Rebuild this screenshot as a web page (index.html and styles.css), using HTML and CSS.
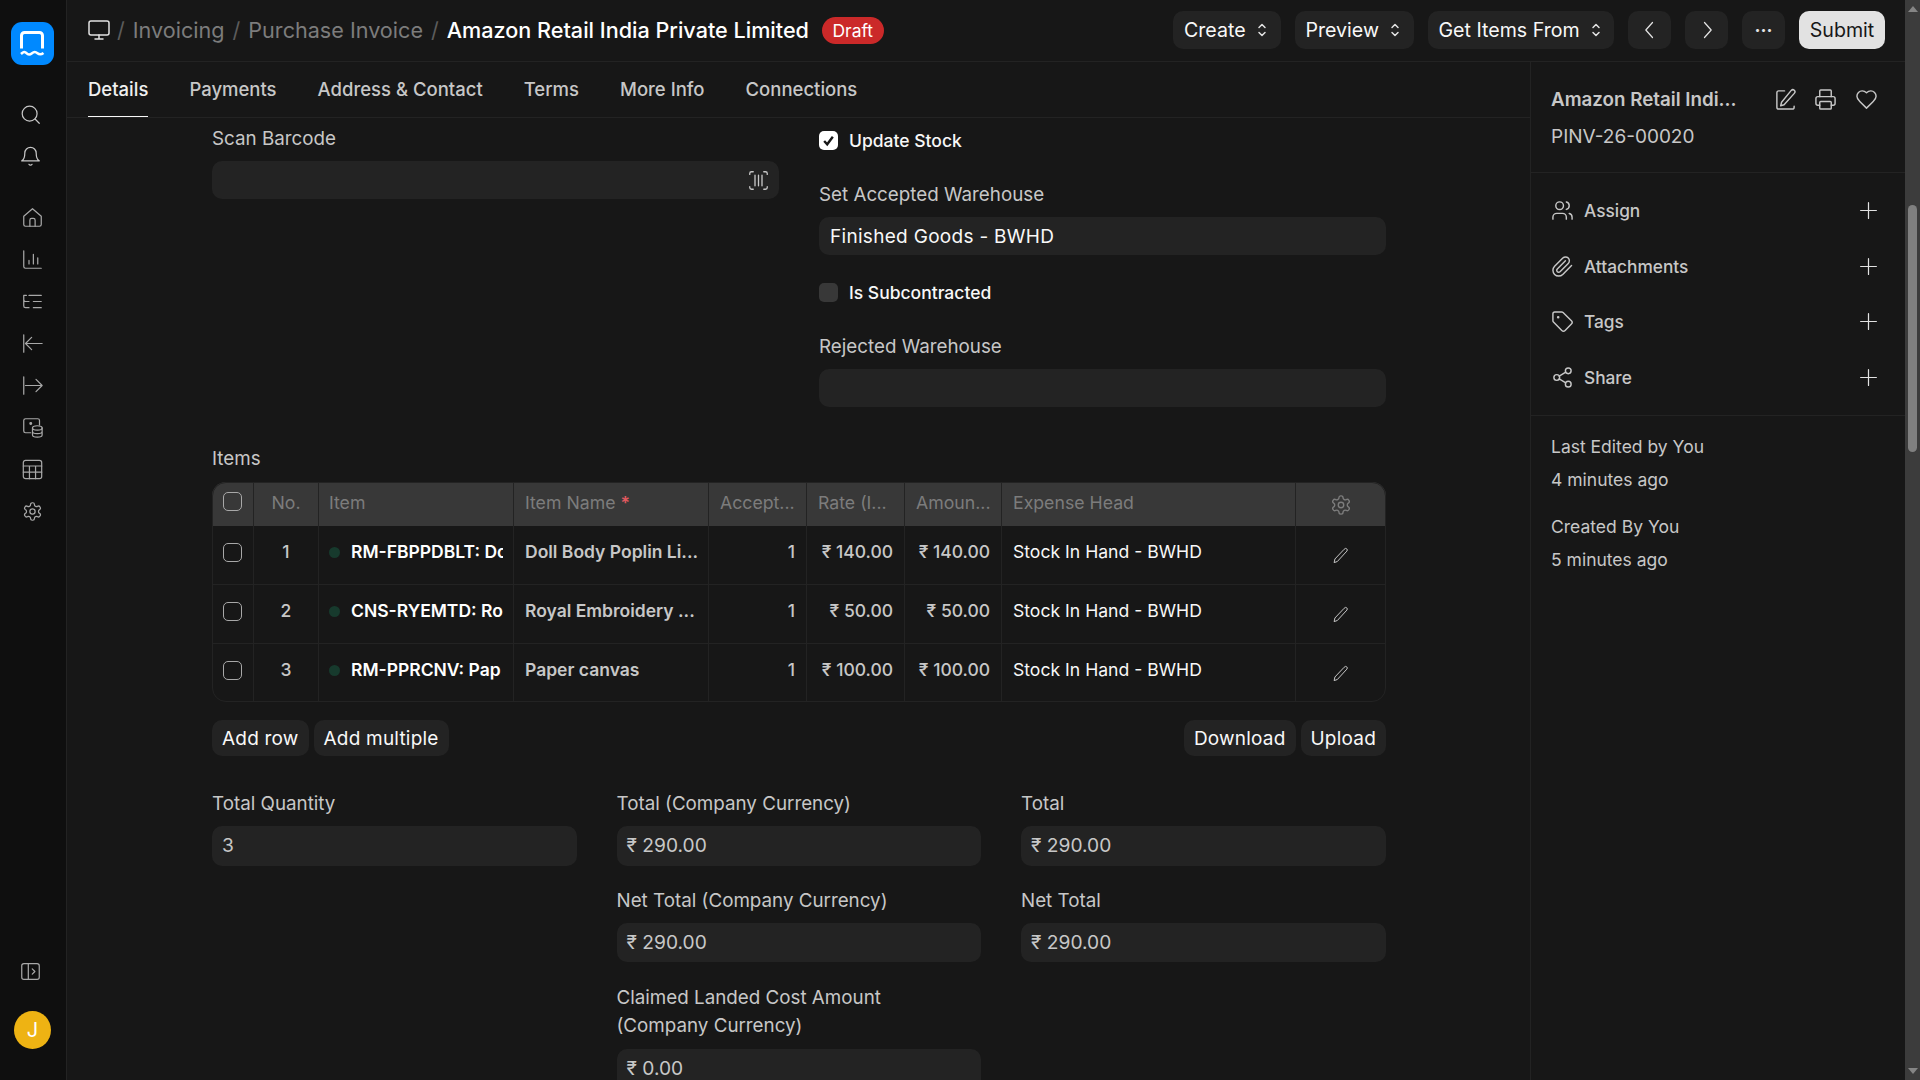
FILE: index.html
```html
<!DOCTYPE html>
<html lang="en">
<head>
  <meta charset="UTF-8" />
  <meta name="viewport" content="width=device-width, initial-scale=1.0"/>
  <title>Amazon Retail India Private Limited - Purchase Invoice</title>
  <link rel="stylesheet" href="styles.css">
</head>
<body>
  <svg class="sprite" xmlns="http://www.w3.org/2000/svg">
    <symbol id="i-monitor" viewBox="0 0 24 24"><rect x="2" y="3" width="20" height="14" rx="2"/><path d="M8 21h8M12 17v4"/></symbol>
    <symbol id="i-search" viewBox="0 0 24 24"><circle cx="11" cy="11" r="8.5"/><path d="m22 22-4.8-4.8"/></symbol>
    <symbol id="i-bell" viewBox="0 0 24 24"><path d="M5.500 8a6.500 6.500 0 0 1 13 0c0 7 3.500 9 3.500 9H2s3.500-2 3.500-9"/><path d="M10.300 21a2 2 0 0 0 3.400 0"/></symbol>
    <symbol id="i-home" viewBox="0 0 24 24"><path d="M2 10.500 12 2l10 8.500V20a2 2 0 0 1-2 2H4a2 2 0 0 1-2-2z"/><path d="M9 22v-7a2 2 0 0 1 2-2h2a2 2 0 0 1 2 2v7"/></symbol>
    <symbol id="i-chart" viewBox="0 0 24 24"><path d="M2 2v18a2 2 0 0 0 2 2h18"/><path d="M8 17v-4M13 17V6M18 17v-7"/></symbol>
    <symbol id="i-tree" viewBox="0 0 24 24"><path d="M22 12H13M22 5H8M22 19h-9"/><path d="M2 5v5a2 2 0 0 0 2 2h4M2 10v7a2 2 0 0 0 2 2h4M2 5h3"/></symbol>
    <symbol id="i-arrow-in" viewBox="0 0 24 24"><path d="M2 22V2M11 5l-7 7 7 7M4 12h19"/></symbol>
    <symbol id="i-arrow-out" viewBox="0 0 24 24"><path d="M2 2v20M4 12h19M16 5l7 7-7 7"/></symbol>
    <symbol id="i-stock" viewBox="0 0 24 24"><path d="M10 18H4a2 2 0 0 1-2-2V4a2 2 0 0 1 2-2h14a2 2 0 0 1 2 2v5"/><circle cx="10" cy="7.500" r="1" fill="currentColor"/><ellipse cx="17.500" cy="12.500" rx="5.500" ry="2.500"/><path d="M12 12.500v8c0 1.400 2.500 2.500 5.500 2.500s5.500-1.100 5.500-2.500v-8M12 16.500c0 1.400 2.500 2.500 5.500 2.500s5.500-1.100 5.500-2.500"/></symbol>
    <symbol id="i-table" viewBox="0 0 24 24"><rect x="1.500" y="1.500" width="21" height="21" rx="2.500"/><path d="M1.500 8h21M1.500 15h21M8.500 8v14.500M15.500 8v14.500"/></symbol>
    <symbol id="i-gear" viewBox="0 0 24 24"><path d="M12.220 2h-.44a2 2 0 0 0-2 2v.18a2 2 0 0 1-1 1.730l-.43.250a2 2 0 0 1-2 0l-.15-.080a2 2 0 0 0-2.730.730l-.22.380a2 2 0 0 0 .730 2.730l.150.100a2 2 0 0 1 1 1.720v.510a2 2 0 0 1-1 1.740l-.150.090a2 2 0 0 0-.730 2.730l.22.380a2 2 0 0 0 2.730.730l.150-.080a2 2 0 0 1 2 0l.43.250a2 2 0 0 1 1 1.730V20a2 2 0 0 0 2 2h.44a2 2 0 0 0 2-2v-.18a2 2 0 0 1 1-1.730l.43-.250a2 2 0 0 1 2 0l.150.080a2 2 0 0 0 2.730-.730l.22-.390a2 2 0 0 0-.730-2.730l-.150-.080a2 2 0 0 1-1-1.740v-.5a2 2 0 0 1 1-1.740l.150-.090a2 2 0 0 0 .730-2.730l-.22-.380a2 2 0 0 0-2.730-.730l-.150.080a2 2 0 0 1-2 0l-.43-.250a2 2 0 0 1-1-1.730V4a2 2 0 0 0-2-2z"/><circle cx="12" cy="12" r="3"/></symbol>
    <symbol id="i-panel" viewBox="0 0 24 24"><rect x="2" y="3" width="20" height="18" rx="2.500"/><path d="M9.500 3v18M14 9l3 3-3 3"/></symbol>
    <symbol id="i-updown" viewBox="0 0 10 16"><path d="m2 5.500 3-3 3 3M2 10.500l3 3 3-3"/></symbol>
    <symbol id="i-left" viewBox="0 0 24 24"><path d="m15 3-8 9 8 9"/></symbol>
    <symbol id="i-right" viewBox="0 0 24 24"><path d="m9 3 8 9-8 9"/></symbol>
    <symbol id="i-edit" viewBox="0 0 24 24"><path d="M11 3H5a2 2 0 0 0-2 2v15a2 2 0 0 0 2 2h14a2 2 0 0 0 2-2v-1"/><path d="M18 2.500a2.200 2.200 0 0 1 3.200 3.100L10.500 17.500 7 18.500l.9-3.600z"/></symbol>
    <symbol id="i-print" viewBox="0 0 24 24"><path d="M6 9V3a1 1 0 0 1 1-1h10a1 1 0 0 1 1 1v6"/><path d="M6 18H4a2 2 0 0 1-2-2v-5a2 2 0 0 1 2-2h16a2 2 0 0 1 2 2v5a2 2 0 0 1-2 2h-2"/><rect x="6" y="14" width="12" height="8" rx="1"/></symbol>
    <symbol id="i-heart" viewBox="0 0 24 24"><path d="M19 14c1.500-1.500 3-3.200 3-5.500A5.500 5.500 0 0 0 16.500 3c-1.800 0-3 .5-4.500 2-1.500-1.500-2.700-2-4.500-2A5.500 5.500 0 0 0 2 8.500c0 2.300 1.500 4 3 5.500l7 7z"/></symbol>
    <symbol id="i-users" viewBox="0 0 24 24"><path d="M16 21v-2a4 4 0 0 0-4-4H6a4 4 0 0 0-4 4v2"/><circle cx="9" cy="7" r="4"/><path d="M22 21v-2a4 4 0 0 0-3-3.870M16 3.130a4 4 0 0 1 0 7.750"/></symbol>
    <symbol id="i-clip" viewBox="0 0 24 24"><path d="m21.440 11.050-9.190 9.190a6 6 0 0 1-8.490-8.490l8.570-8.570A4 4 0 1 1 18 8.840l-8.590 8.570a2 2 0 0 1-2.830-2.830l8.490-8.480"/></symbol>
    <symbol id="i-tag" viewBox="0 0 24 24"><path d="M12.590 2.590A2 2 0 0 0 11.170 2H4a2 2 0 0 0-2 2v7.170a2 2 0 0 0 .590 1.420l8.700 8.700a2.430 2.430 0 0 0 3.420 0l6.580-6.580a2.430 2.430 0 0 0 0-3.420z"/><circle cx="7.500" cy="7.500" r=".6" fill="currentColor"/></symbol>
    <symbol id="i-share" viewBox="0 0 24 24"><circle cx="18" cy="5" r="3"/><circle cx="6" cy="12" r="3"/><circle cx="18" cy="19" r="3"/><path d="m8.590 13.510 6.830 3.980M15.410 6.510l-6.820 3.980"/></symbol>
    <symbol id="i-plus" viewBox="0 0 24 24"><path d="M12 3v18M3 12h18"/></symbol>
    <symbol id="i-pencil" viewBox="0 0 24 24"><path d="M17.500 2.800a2.300 2.300 0 0 1 3.500 3L7.500 20.500 3 22l1-4.500Z"/></symbol>
    <symbol id="i-barcode" viewBox="0 0 24 24"><path d="M6 2H4a2 2 0 0 0-2 2v1M18 2h2a2 2 0 0 1 2 2v1M6 22H4a2 2 0 0 1-2-2v-1M18 22h2a2 2 0 0 0 2-2v-1"/><path d="M8 6v12M12 6v12M16 6v12"/></symbol>
  </svg>

  <div class="app">
    <aside class="rail">
      <div class="logo">
        <svg width="27" height="27" viewBox="0 0 27 27" fill="none" stroke="#fff" stroke-width="3"><path d="M2.500 18.500V5.500a3 3 0 0 1 3-3h15a3 3 0 0 1 3 3v13"/><path d="M2 24c2.500-2.500 4-2.500 5.500-.8s3.500 1.700 5.500 0 3.500-1.700 5.500 0 3.500 1.700 6-.2" stroke-width="2.500"/></svg>
      </div>
      <nav class="rail-group rail-top">
        <a class="rail-item shift"><svg class="ico"><use href="#i-search"/></svg></a>
        <a class="rail-item shift"><svg class="ico"><use href="#i-bell"/></svg></a>
      </nav>
      <nav class="rail-group rail-mods">
        <a class="rail-item"><svg class="ico"><use href="#i-home"/></svg></a>
        <a class="rail-item"><svg class="ico"><use href="#i-chart"/></svg></a>
        <a class="rail-item"><svg class="ico"><use href="#i-tree"/></svg></a>
        <a class="rail-item"><svg class="ico"><use href="#i-arrow-in"/></svg></a>
        <a class="rail-item"><svg class="ico"><use href="#i-arrow-out"/></svg></a>
        <a class="rail-item"><svg class="ico"><use href="#i-stock"/></svg></a>
        <a class="rail-item"><svg class="ico"><use href="#i-table"/></svg></a>
        <a class="rail-item"><svg class="ico"><use href="#i-gear"/></svg></a>
      </nav>
      <div class="rail-bottom">
        <a class="rail-item shift"><svg class="ico"><use href="#i-panel"/></svg></a>
        <div class="avatar">J</div>
      </div>
    </aside>

    <div class="main">
      <header class="topbar">
        <div class="crumbs">
          <svg class="ico crumb-ico"><use href="#i-monitor"/></svg>
          <span class="sep">/</span>
          <span class="crumb">Invoicing</span>
          <span class="sep">/</span>
          <span class="crumb">Purchase Invoice</span>
          <span class="sep">/</span>
          <span class="crumb-current">Amazon Retail India Private Limited</span>
          <span class="badge">Draft</span>
        </div>
        <div class="actions">
          <button class="btn btn-select w-create">Create <svg class="updown"><use href="#i-updown"/></svg></button>
          <button class="btn btn-select w-preview">Preview <svg class="updown"><use href="#i-updown"/></svg></button>
          <button class="btn btn-select w-items">Get Items From <svg class="updown"><use href="#i-updown"/></svg></button>
          <button class="btn btn-icon"><svg class="ico"><use href="#i-left"/></svg></button>
          <button class="btn btn-icon"><svg class="ico"><use href="#i-right"/></svg></button>
          <button class="btn btn-icon dots">&middot;&middot;&middot;</button>
          <button class="btn btn-primary">Submit</button>
        </div>
      </header>

      <div class="content">
        <div class="doc">
          <div class="tabs">
            <a class="tab active">Details</a>
            <a class="tab">Payments</a>
            <a class="tab">Address &amp; Contact</a>
            <a class="tab">Terms</a>
            <a class="tab">More Info</a>
            <a class="tab">Connections</a>
          </div>

          <div class="form">
            <section class="two-col">
              <div>
                <label class="field-label">Scan Barcode</label>
                <div class="input input-barcode"><svg class="ico barcode"><use href="#i-barcode"/></svg></div>
              </div>
              <div class="right-col">
                <div class="check-row"><span class="check checked"><svg width="13" height="13" viewBox="0 0 12 12" fill="none" stroke="#171717" stroke-width="2.200"><path d="m2 6.500 2.800 3L10 2.500"/></svg></span>Update Stock</div>
                <label class="field-label gap-a">Set Accepted Warehouse</label>
                <div class="input input-value">Finished Goods - BWHD</div>
                <div class="check-row gap-b"><span class="check"></span>Is Subcontracted</div>
                <label class="field-label gap-a">Rejected Warehouse</label>
                <div class="input"></div>
              </div>
            </section>

            <div class="items-label">Items</div>
            <table class="grid">
              <colgroup>
                <col class="c-check"><col class="c-no"><col class="c-name"><col class="c-name"><col class="c-num"><col class="c-num"><col class="c-amt"><col class="c-head"><col class="c-edit">
              </colgroup>
              <thead>
                <tr>
                  <th class="cell-check"><input type="checkbox"></th>
                  <th class="center">No.</th>
                  <th class="code-cell">Item</th>
                  <th>Item Name <span class="req">*</span></th>
                  <th>Accept...</th>
                  <th>Rate (I...</th>
                  <th>Amoun...</th>
                  <th>Expense Head</th>
                  <th class="center"><svg class="ico gear-head"><use href="#i-gear"/></svg></th>
                </tr>
              </thead>
              <tbody>
                <tr>
                  <td class="cell-check"><input type="checkbox"></td>
                  <td class="center">1</td>
                  <td class="code-cell"><div class="item-code"><span class="dot"></span><b>RM-FBPPDBLT: Do</b></div></td>
                  <td class="item-name">Doll Body Poplin Li...</td>
                  <td class="num">1</td>
                  <td class="num">₹ 140.00</td>
                  <td class="num">₹ 140.00</td>
                  <td class="head">Stock In Hand - BWHD</td>
                  <td class="center"><svg class="pencil"><use href="#i-pencil"/></svg></td>
                </tr>
                <tr>
                  <td class="cell-check"><input type="checkbox"></td>
                  <td class="center">2</td>
                  <td class="code-cell"><div class="item-code"><span class="dot"></span><b>CNS-RYEMTD: Ro</b></div></td>
                  <td class="item-name">Royal Embroidery ...</td>
                  <td class="num">1</td>
                  <td class="num">₹ 50.00</td>
                  <td class="num">₹ 50.00</td>
                  <td class="head">Stock In Hand - BWHD</td>
                  <td class="center"><svg class="pencil"><use href="#i-pencil"/></svg></td>
                </tr>
                <tr class="row-short">
                  <td class="cell-check"><input type="checkbox"></td>
                  <td class="center">3</td>
                  <td class="code-cell"><div class="item-code"><span class="dot"></span><b>RM-PPRCNV: Pap</b></div></td>
                  <td class="item-name">Paper canvas</td>
                  <td class="num">1</td>
                  <td class="num">₹ 100.00</td>
                  <td class="num">₹ 100.00</td>
                  <td class="head">Stock In Hand - BWHD</td>
                  <td class="center"><svg class="pencil"><use href="#i-pencil"/></svg></td>
                </tr>
              </tbody>
            </table>

            <div class="grid-actions">
              <div class="btn-group">
                <button class="btn btn-sm">Add row</button>
                <button class="btn btn-sm">Add multiple</button>
              </div>
              <div class="btn-group">
                <button class="btn btn-sm">Download</button>
                <button class="btn btn-sm">Upload</button>
              </div>
            </div>

            <section class="three-col">
              <div>
                <label class="field-label">Total Quantity</label>
                <div class="input input-tall">3</div>
              </div>
              <div>
                <label class="field-label">Total (Company Currency)</label>
                <div class="input input-tall">₹ 290.00</div>
                <label class="field-label gap-c">Net Total (Company Currency)</label>
                <div class="input input-tall">₹ 290.00</div>
                <label class="field-label gap-c label-wrap">Claimed Landed Cost Amount (Company Currency)</label>
                <div class="input input-tall">₹ 0.00</div>
              </div>
              <div>
                <label class="field-label">Total</label>
                <div class="input input-tall">₹ 290.00</div>
                <label class="field-label gap-c">Net Total</label>
                <div class="input input-tall">₹ 290.00</div>
              </div>
            </section>
          </div>
        </div>

        <aside class="side">
          <div class="side-head">
            <div class="side-title-row">
              <span class="side-title">Amazon Retail Indi...</span>
              <div class="side-icons">
                <svg class="ico"><use href="#i-edit"/></svg>
                <svg class="ico"><use href="#i-print"/></svg>
                <svg class="ico"><use href="#i-heart"/></svg>
              </div>
            </div>
            <div class="side-id">PINV-26-00020</div>
          </div>
          <div class="side-list">
            <div class="side-row"><svg class="ico"><use href="#i-users"/></svg><span>Assign</span><svg class="plus"><use href="#i-plus"/></svg></div>
            <div class="side-row"><svg class="ico"><use href="#i-clip"/></svg><span>Attachments</span><svg class="plus"><use href="#i-plus"/></svg></div>
            <div class="side-row"><svg class="ico"><use href="#i-tag"/></svg><span>Tags</span><svg class="plus"><use href="#i-plus"/></svg></div>
            <div class="side-row"><svg class="ico"><use href="#i-share"/></svg><span>Share</span><svg class="plus"><use href="#i-plus"/></svg></div>
          </div>
          <div class="side-meta">
            <p>Last Edited by You</p>
            <p>4 minutes ago</p>
            <p class="meta-gap">Created By You</p>
            <p>5 minutes ago</p>
          </div>
        </aside>
      </div>
    </div>

    <div class="scrollbar">
      <span class="arrow-up"></span>
      <span class="thumb"></span>
      <span class="arrow-down"></span>
    </div>
  </div>
</body>
</html>
```

FILE: styles.css
```css
* {
  box-sizing: border-box;
}
html, body {
  height: 100%;
}
body {
  margin: 0;
  background-color: #171717;
  color: #f8f8f8;
  font-family: "Inter", "Liberation Sans", sans-serif;
  font-size: 17.5px;
  overflow: hidden;
}
p {
  margin: 0;
}
button {
  font-family: inherit;
}
.sprite {
  display: none;
}
.ico {
  width: 20px;
  height: 20px;
  flex: none;
  fill: none;
  stroke: currentColor;
  stroke-width: 1.5;
  stroke-linecap: round;
  stroke-linejoin: round;
}

.app {
  display: flex;
  height: 1080px;
}

/* left rail */
.rail {
  width: 67px;
  flex: none;
  display: flex;
  flex-direction: column;
  align-items: center;
  background-color: #0f0f0f;
  border-right: 1px solid #232323;
  padding-top: 22px;
  color: #a8a8a8;
}
.logo {
  width: 43px;
  height: 43px;
  margin-right: 1px;
  border-radius: 11px;
  background-color: #0089ff;
  display: flex;
  align-items: center;
  justify-content: center;
}
.rail-group {
  display: flex;
  flex-direction: column;
  align-items: center;
  width: 100%;
}
.rail-top {
  margin-top: 28px;
  color: #c7c7c7;
}
.rail-mods {
  margin-top: 19px;
  padding-right: 1px;
}
.rail-item {
  height: 42px;
  display: flex;
  align-items: center;
  justify-content: center;
  width: 100%;
}
.rail-item .ico {
  width: 21px;
  height: 21px;
  stroke-width: 1.4;
}
.rail-item.shift {
  padding-right: 5px;
}
.rail-bottom {
  margin-top: auto;
  width: 100%;
  display: flex;
  flex-direction: column;
  align-items: center;
  padding-bottom: 31px;
  gap: 19px;
}
.avatar {
  width: 37px;
  height: 38px;
  margin-right: 1px;
  border-radius: 50%;
  background-color: #eeb313;
  color: #fff;
  font-size: 20px;
  display: flex;
  align-items: center;
  justify-content: center;
}

/* top bar */
.main {
  flex: 1;
  min-width: 0;
  display: flex;
  flex-direction: column;
}
.topbar {
  height: 62px;
  flex: none;
  display: flex;
  align-items: center;
  justify-content: space-between;
  padding: 0 20px 1px 22px;
  border-bottom: 1px solid #232323;
}
.crumbs {
  display: flex;
  align-items: center;
  font-size: 21.6px;
  color: #7c7c7c;
}
.crumb-ico {
  width: 24px;
  height: 24px;
  margin: 0 -2px;
  color: #e2e2e2;
}
.sep {
  margin: 0 8px;
  color: #5c5c5c;
}
.crumb-current {
  color: #fff;
  font-weight: 500;
}
.badge {
  margin-left: 13px;
  height: 27px;
  padding: 0 10.500px;
  border-radius: 14px;
  background-color: #cb2929;
  color: #fff;
  font-size: 17.5px;
  display: flex;
  align-items: center;
}
.actions {
  display: flex;
  gap: 14px;
}
.btn {
  height: 38px;
  padding: 0 11px;
  border: none;
  border-radius: 10px;
  background-color: #232323;
  color: #f8f8f8;
  font-size: 19.6px;
  white-space: nowrap;
  display: flex;
  align-items: center;
  gap: 11px;
  cursor: pointer;
}
.btn-select {
  justify-content: space-between;
  padding-right: 14px;
}
.w-create { width: 107.500px; }
.w-preview { width: 119px; }
.w-items { width: 186.500px; }
.btn-icon {
  width: 43px;
  justify-content: center;
  padding: 0;
}
.btn-icon .ico {
  width: 20px;
  height: 20px;
  color: #e2e2e2;
}
.dots {
  font-size: 18px;
  font-weight: 700;
  color: #e2e2e2;
}
.btn-primary {
  background-color: #e2e2e2;
  color: #171717;
  width: 86px;
  justify-content: center;
  padding: 0;
}
.updown {
  width: 10px;
  height: 16px;
  flex: none;
  fill: none;
  stroke: #e2e2e2;
  stroke-width: 1.5;
  stroke-linecap: round;
  stroke-linejoin: round;
}

/* doc area */
.content {
  flex: 1;
  min-height: 0;
  display: flex;
}
.doc {
  width: 1463px;
  flex: none;
  overflow: hidden;
}
.tabs {
  height: 56px;
  display: flex;
  gap: 41px;
  padding-left: 21px;
  border-bottom: 1px solid #232323;
}
.tab {
  height: 55px;
  padding-top: 15px;
  line-height: 25px;
  font-size: 18.5px;
  font-weight: 500;
  color: #c7c7c7;
}
.tab.active {
  color: #f0f0f0;
  border-bottom: 1px solid #f8f8f8;
}
.form {
  padding: 6px 144px 0 145px;
}
.field-label {
  display: block;
  padding-top: 1px;
  line-height: 28px;
  margin-bottom: 8px;
  font-size: 18.8px;
  color: #c7c7c7;
}
.input {
  height: 38px;
  border-radius: 10px;
  background-color: #232323;
  padding: 0 11px;
  line-height: 38px;
  color: #c7c7c7;
}
.input-value {
  color: #f8f8f8;
  font-size: 19px;
  line-height: 39px;
  letter-spacing: 0.3px;
}
.input-tall {
  height: 39.5px;
  line-height: 39.5px;
  padding: 0 10px;
  font-size: 19.2px;
}
.input-barcode {
  display: flex;
  align-items: center;
  justify-content: flex-end;
  padding-right: 10px;
}
.barcode {
  width: 21px;
  height: 21px;
  color: #c7c7c7;
}
.two-col {
  display: grid;
  grid-template-columns: 567px 567px;
  column-gap: 40px;
}
.right-col {
  padding-top: 3px;
}
.check-row {
  display: flex;
  align-items: center;
  gap: 11px;
  height: 28px;
  padding-bottom: 1px;
  font-weight: 500;
  font-size: 17.5px;
}
.check {
  width: 19px;
  height: 19px;
  border-radius: 5px;
  background-color: #383838;
  display: flex;
  align-items: center;
  justify-content: center;
}
.check.checked {
  background-color: #fff;
}
.gap-a {
  margin-top: 25px;
}
.gap-b {
  margin-top: 24px;
}
.gap-c {
  margin-top: 21px;
}
.three-col .field-label {
  padding-top: 0;
}
.three-col .label-wrap {
  width: 300px;
  padding-top: 1px;
  margin-bottom: 9px;
}

/* items grid */
.items-label {
  margin-top: 37px;
  padding-top: 1px;
  line-height: 28px;
  margin-bottom: 9px;
  font-size: 18.8px;
  color: #c7c7c7;
}
.grid {
  width: 1174px;
  table-layout: fixed;
  border-collapse: separate;
  border-spacing: 0;
  border-radius: 14px;
  outline: 1px solid #232323;
  outline-offset: -1px;
}
.c-check { width: 42px; }
.c-no { width: 65px; }
.c-name { width: 195px; }
.c-num { width: 98px; }
.c-amt { width: 97px; }
.c-head { width: 294px; }
.c-edit { width: 90px; }
.grid th {
  height: 44px;
  background-color: #383838;
  color: #7c7c7c;
  font-size: 17.7px;
  font-weight: 400;
  text-align: left;
  padding: 0 10px 3px 11px;
  border-right: 1px solid #232323;
  white-space: nowrap;
  overflow: hidden;
}
.grid th:first-child {
  border-top-left-radius: 14px;
}
.grid th:last-child {
  border-top-right-radius: 14px;
  border-right: none;
}
.grid td {
  height: 59px;
  padding: 12px 11px 0;
  line-height: 28px;
  vertical-align: top;
  font-size: 17.5px;
  font-weight: 450;
  color: #c7c7c7;
  border-right: 1px solid #232323;
  border-bottom: 1px solid #232323;
  white-space: nowrap;
  overflow: hidden;
}
.grid td:last-child {
  border-right: none;
}
.grid .row-short td {
  height: 58px;
  border-bottom: none;
}
.grid th.center,
.grid td.center {
  text-align: center;
  padding-left: 10px;
  padding-right: 10px;
}
.grid input[type="checkbox"] {
  appearance: none;
  display: block;
  width: 19px;
  height: 19px;
  margin: 0;
  border: 1.5px solid #a8a8a8;
  border-radius: 5px;
  background: transparent;
}
.grid th.cell-check {
  padding: 0 0 5px 11px;
}
.grid td.cell-check {
  padding: 17px 0 0 11px;
}
.req {
  color: #e0595f;
  font-weight: 600;
}
.grid .code-cell {
  padding-left: 10px;
  padding-right: 10px;
}
.item-code {
  display: flex;
  align-items: center;
  gap: 11px;
  overflow: hidden;
  color: #fff;
}
.item-code b {
  font-weight: 600;
}
.dot {
  width: 11px;
  height: 11px;
  flex: none;
  border-radius: 50%;
  background-color: #173a2d;
}
.grid .item-name {
  font-weight: 600;
}
.num {
  text-align: right;
}
.grid .head {
  color: #f8f8f8;
  font-size: 17.6px;
  font-weight: 400;
}
.pencil {
  width: 17px;
  height: 17px;
  margin: 9px 2px 0 0;
  fill: none;
  stroke: #c7c7c7;
  stroke-width: 1.4;
  stroke-linecap: round;
  stroke-linejoin: round;
  vertical-align: top;
}
.gear-head {
  width: 22px;
  height: 22px;
  margin-top: 4px;
  vertical-align: middle;
  color: #7c7c7c;
}
.grid-actions {
  display: flex;
  justify-content: space-between;
  margin-top: 18px;
}
.btn-group {
  display: flex;
  gap: 5px;
}
.btn-sm {
  height: 36px;
  padding: 0 10px;
  font-size: 19px;
  letter-spacing: 0.2px;
}
.three-col {
  display: grid;
  grid-template-columns: repeat(3, 364.500px);
  column-gap: 40px;
  margin-top: 34px;
}

/* right sidebar */
.side {
  flex: 1;
  min-width: 0;
  border-left: 1px solid #232323;
}
.side-head {
  height: 111px;
  padding: 19px 20px 0 20px;
  border-bottom: 1px solid #232323;
}
.side-title-row {
  display: flex;
  align-items: center;
  justify-content: space-between;
  height: 36px;
}
.side-title {
  font-size: 18.75px;
  font-weight: 600;
  color: #c7c7c7;
}
.side-icons {
  display: flex;
  gap: 17.500px;
  padding-right: 7.500px;
  color: #c7c7c7;
}
.side-icons .ico {
  width: 23px;
  height: 23px;
}
.side-id {
  margin-top: 5px;
  font-size: 19px;
  color: #c7c7c7;
  line-height: 30px;
}
.side-list {
  height: 243px;
  padding: 10px 26.500px 0 20px;
  border-bottom: 1px solid #232323;
}
.side-row {
  height: 55.500px;
  display: flex;
  align-items: center;
  gap: 10px;
  font-size: 17.3px;
  font-weight: 500;
  color: #c7c7c7;
}
.side-row .ico {
  width: 23px;
  height: 23px;
}
.plus {
  width: 21px;
  height: 21px;
  margin-left: auto;
  fill: none;
  stroke: #e2e2e2;
  stroke-width: 1.4;
  stroke-linecap: round;
}
.side-meta {
  padding: 14px 20px 0;
  color: #c7c7c7;
  line-height: 33px;
}
.meta-gap {
  margin-top: 14px;
}

/* page scrollbar */
.scrollbar {
  width: 15px;
  flex: none;
  background-color: #3c3c3c;
  display: flex;
  flex-direction: column;
  align-items: center;
  padding: 6px 0;
}
.arrow-up,
.arrow-down {
  width: 0;
  height: 0;
  border-left: 5px solid transparent;
  border-right: 5px solid transparent;
}
.arrow-up {
  border-bottom: 6px solid #858585;
}
.arrow-down {
  border-top: 6px solid #858585;
  margin-top: auto;
}
.thumb {
  width: 9px;
  height: 247px;
  margin-top: 193px;
  border-radius: 5px;
  background-color: #808080;
}
```
